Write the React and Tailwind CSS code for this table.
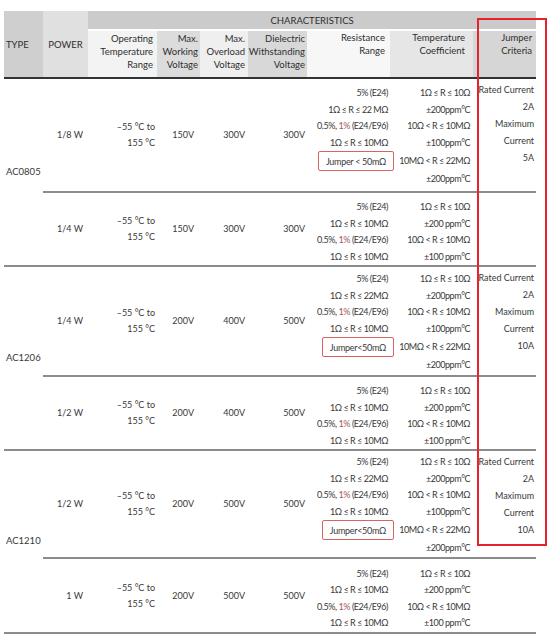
import React from "react";

const RED_1 = "text-[#a05858]";

function ResLines({ variant, jumper }) {
  const second = variant === "22sp" ? "1Ω ≤ R ≤ 22 MΩ" : variant === "22" ? "1Ω ≤ R ≤ 22MΩ" : "1Ω ≤ R ≤ 10MΩ";
  return (
    <div className="flex flex-col items-end leading-[16.5px] tracking-[-0.45px]">
      <div>5% (E24)</div>
      <div>{second}</div>
      <div>
        0.5%, <span className={RED_1}>1%</span> (E24/E96)
      </div>
      <div>1Ω ≤ R ≤ 10MΩ</div>
      {jumper && (
        <>
          <div className="h-[20px] -mr-[6px] px-[7px] flex items-center border border-[#d9645f] rounded-[2px] leading-none tracking-[-0.3px]">
            {jumper}
          </div>
          <div className="h-[16.5px]" />
        </>
      )}
    </div>
  );
}

function TempLines({ full, space }) {
  const p2 = space ? "±200 ppm°C" : "±200ppm°C";
  const p1 = space ? "±100 ppm°C" : "±100ppm°C";
  return (
    <div className="flex flex-col items-end leading-[16.5px] tracking-[-0.45px]">
      <div>1Ω ≤ R ≤ 10Ω</div>
      <div>{p2}</div>
      <div>10Ω &lt; R ≤ 10MΩ</div>
      <div>{p1}</div>
      {full && (
        <>
          <div className="h-[20px] flex items-center">10MΩ &lt; R ≤ 22MΩ</div>
          <div>±200ppm°C</div>
        </>
      )}
    </div>
  );
}

function Jumper({ max }) {
  return (
    <div className="flex flex-col items-end leading-[17px]">
      <div>Rated Current</div>
      <div>2A</div>
      <div>Maximum</div>
      <div>Current</div>
      <div>{max}</div>
    </div>
  );
}

function OpTemp() {
  return (
    <div className="flex flex-col items-end leading-[16px]">
      <div>–55 °C to</div>
      <div>155 °C</div>
    </div>
  );
}

const bd = "border-b-2 border-[#8c8c8c]";

function Group({ type, a, b, h1, h2 }) {
  return (
    <>
      <tr>
        <td rowSpan={2} className={`${bd} align-middle text-left pl-[2px] text-[9.5px]`}>{type}</td>
        <td className={`${bd} ${h1} align-middle text-right pr-[5px]`}>{a.power}</td>
        <td className={`${bd} align-middle pr-[2px]`}><OpTemp /></td>
        <td className={`${bd} align-middle text-right pr-[6px]`}>{a.mw}</td>
        <td className={`${bd} align-middle text-right pr-[3px]`}>{a.mo}</td>
        <td className={`${bd} align-middle text-right pr-[2px]`}>{a.di}</td>
        <td className={`${bd} align-middle pt-[3px] pr-[2px]`}><ResLines variant={a.rv} jumper={a.jumper} /></td>
        <td className={`${bd} align-middle pt-[3px] pr-[3px]`}><TempLines full /></td>
        <td className={`${bd} align-top pt-[2px] pr-[2px]`}><Jumper max={a.max} /></td>
      </tr>
      <tr>
        <td className={`${bd} ${h2} align-middle text-right pr-[5px]`}>{b.power}</td>
        <td className={`${bd} align-middle pr-[2px]`}><OpTemp /></td>
        <td className={`${bd} align-middle text-right pr-[6px]`}>{b.mw}</td>
        <td className={`${bd} align-middle text-right pr-[3px]`}>{b.mo}</td>
        <td className={`${bd} align-middle text-right pr-[2px]`}>{b.di}</td>
        <td className={`${bd} align-middle pt-[6px] pr-[2px]`}><ResLines variant="10" /></td>
        <td className={`${bd} align-middle pt-[6px] pr-[3px]`}><TempLines space /></td>
        <td className={`${bd}`}></td>
      </tr>
    </>
  );
}

export default function App() {
  return (
    <div className="relative w-[556px] h-[636px] bg-white overflow-hidden font-[Lato,'Open_Sans',sans-serif] text-[9px] text-[#383838]">
      <div className="pt-[11px] pl-[4px]">
        <table className="table-fixed border-collapse w-[532px]">
          <colgroup>
            <col className="w-[39px]" />
            <col className="w-[45px]" />
            <col className="w-[69px]" />
            <col className="w-[43px]" />
            <col className="w-[48px]" />
            <col className="w-[59px]" />
            <col className="w-[83px]" />
            <col className="w-[83px]" />
            <col className="w-[63px]" />
          </colgroup>
          <thead className="text-[9.5px] leading-[13px] text-[#2e2e2e]">
            <tr>
              <th rowSpan={2} className="bg-[#cfcfcf] font-normal text-left pl-[2px] align-middle border-b-2 border-[#333]">TYPE</th>
              <th rowSpan={2} className="bg-[#e0e0e0] font-normal text-center align-middle border-b-2 border-[#333]">POWER</th>
              <th colSpan={7} className="h-[19px] bg-[#cbcbcb] font-normal text-center align-middle border-b-2 border-white">CHARACTERISTICS</th>
            </tr>
            <tr>
              <th className="h-[48px] bg-[#f3f3f3] font-normal text-right align-top pt-[1px] pr-[4px] border-b-2 border-[#333]">Operating<br />Temperature<br />Range</th>
              <th className="bg-[#dcdcdc] font-normal text-right align-top pt-[1px] pr-[2px] border-b-2 border-[#333]">Max.<br />Working<br />Voltage</th>
              <th className="bg-[#efefef] font-normal text-right align-top pt-[1px] pr-[3px] border-b-2 border-[#333]">Max.<br />Overload<br />Voltage</th>
              <th className="bg-[#d8d8d8] font-normal text-right align-top pt-[1px] pr-[2px] border-b-2 border-[#333]">Dielectric<br />Withstanding<br />Voltage</th>
              <th className="bg-[#f7f7f7] font-normal text-right align-top pr-[5px] border-b-2 border-[#333]">Resistance<br />Range</th>
              <th className="bg-[#e6e6e6] font-normal text-right align-top pr-[8px] border-b-2 border-[#333]">Temperature<br />Coefficient</th>
              <th className="bg-[#d6d6d6] font-normal text-right align-top pr-[4px] border-b-2 border-[#333]">Jumper<br />Criteria</th>
            </tr>
          </thead>
          <tbody>
            <Group
              type="AC0805"
              h1="h-[114px]"
              h2="h-[72px]"
              a={{ power: "1/8 W", mw: "150V", mo: "300V", di: "300V", rv: "22sp", jumper: "Jumper < 50mΩ", max: "5A" }}
              b={{ power: "1/4 W", mw: "150V", mo: "300V", di: "300V" }}
            />
            <Group
              type="AC1206"
              h1="h-[110px]"
              h2="h-[74px]"
              a={{ power: "1/4 W", mw: "200V", mo: "400V", di: "500V", rv: "22", jumper: "Jumper<50mΩ", max: "10A" }}
              b={{ power: "1/2 W", mw: "200V", mo: "400V", di: "500V" }}
            />
            <Group
              type="AC1210"
              h1="h-[108px]"
              h2="h-[75px]"
              a={{ power: "1/2 W", mw: "200V", mo: "500V", di: "500V", rv: "22", jumper: "Jumper<50mΩ", max: "10A" }}
              b={{ power: "1 W", mw: "200V", mo: "500V", di: "500V" }}
            />
          </tbody>
        </table>
      </div>
      <div className="absolute left-[477px] top-[18px] w-[70px] h-[528px] border-[2.5px] border-[#e5232b]" />
    </div>
  );
}
